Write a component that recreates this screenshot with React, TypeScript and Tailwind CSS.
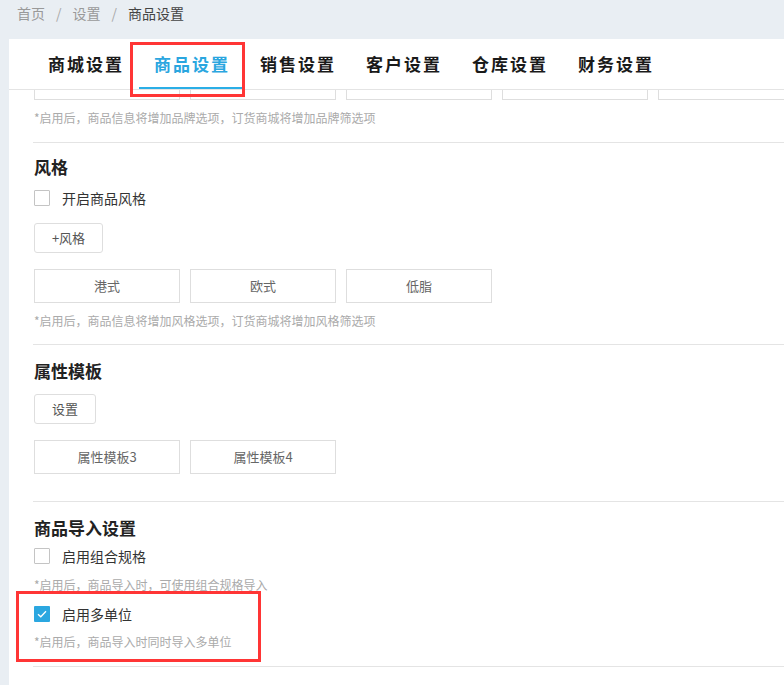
import React from 'react'

const font = { fontFamily: '"Noto Sans CJK SC", "Microsoft YaHei", sans-serif' }

const tabs = ['商城设置', '商品设置', '销售设置', '客户设置', '仓库设置', '财务设置']

function Box({ label }: { label?: string }) {
  return (
    <div className="flex h-[34px] w-[146px] shrink-0 items-center justify-center border border-[#dedede] text-[13px] text-[#666]">
      {label}
    </div>
  )
}

function Checkbox({ checked, label }: { checked?: boolean; label: string }) {
  return (
    <div className="flex h-[24px] items-center">
      {checked ? (
        <span className="flex h-[16px] w-[16px] items-center justify-center rounded-[1px] bg-[#2ba7e0]">
          <svg width="10" height="8" viewBox="0 0 10 8" fill="none">
            <path d="M1 4.2 3.8 6.8 9 1.2" stroke="white" strokeWidth="1.3" />
          </svg>
        </span>
      ) : (
        <span className="h-[16px] w-[16px] rounded-[1px] border border-[#c4c4c4] bg-white" />
      )}
      <span className="ml-[12px] text-[14px] text-[#333]">{label}</span>
    </div>
  )
}

function Helper({ children, className = '' }: { children: React.ReactNode; className?: string }) {
  return <div className={`text-[12px] leading-[20px] text-[#aaa] ${className}`}>{children}</div>
}

function Heading({ children, className = '' }: { children: React.ReactNode; className?: string }) {
  return <div className={`text-[17px] font-bold leading-[24px] text-[#222] ${className}`}>{children}</div>
}

function Divider({ className = '' }: { className?: string }) {
  return <div className={`ml-[-1px] h-px bg-[#e4e4e4] ${className}`} />
}

function Button({ children, width }: { children: React.ReactNode; width: string }) {
  return (
    <div className={`flex h-[30px] ${width} items-center justify-center rounded-[3px] border border-[#dedede] text-[13px] text-[#555]`}>
      {children}
    </div>
  )
}

export default function App() {
  return (
    <div className="h-[685px] w-full overflow-hidden bg-[#e9eef3]" style={font}>
      <div className="flex h-[39px] items-start pl-[17px] pt-[3px] text-[14px] leading-[20px]">
        <span className="text-[#999]">首页</span>
        <span className="mx-[11px] text-[#aaa]">/</span>
        <span className="text-[#999]">设置</span>
        <span className="mx-[11px] text-[#aaa]">/</span>
        <span className="text-[#444]">商品设置</span>
      </div>

      <div className="ml-[9px] h-[646px] overflow-hidden bg-white">
        <div className="relative z-10 flex h-[51px] border-b border-[#e4e4e4] bg-white pl-[23px]">
          {tabs.map((tab, i) => (
            <div
              key={tab}
              className={`relative flex h-full w-[106px] items-center justify-center pl-[2px] text-[17px] font-bold tracking-[2px] ${
                i === 1 ? 'text-[#2aa6df]' : 'text-[#1a1a1a]'
              }`}
            >
              {tab}
              {i === 1 && (
                <>
                  <span className="absolute bottom-0 left-[1px] right-[2px] h-[2px] bg-[#2aaee6]" />
                  <span className="pointer-events-none absolute left-[-8px] top-[3px] h-[55px] w-[115px] border-[3px] border-[#ff3535]" />
                </>
              )}
            </div>
          ))}
        </div>

        <div className="pl-[25px]">
          <div className="mt-[-24px] flex gap-[10px]">
            <Box />
            <Box />
            <Box />
            <Box />
            <Box />
          </div>
          <Helper className="mt-[8px]">*启用后，商品信息将增加品牌选项，订货商城将增加品牌筛选项</Helper>
          <Divider className="mt-[14px]" />

          <Heading className="pt-[12px]">风格</Heading>
          <div className="mt-[7px]">
            <Checkbox label="开启商品风格" />
          </div>
          <div className="mt-[13px]">
            <Button width="w-[69px]">+风格</Button>
          </div>
          <div className="mt-[16px] flex gap-[10px]">
            <Box label="港式" />
            <Box label="欧式" />
            <Box label="低脂" />
          </div>
          <Helper className="mt-[8px]">*启用后，商品信息将增加风格选项，订货商城将增加风格筛选项</Helper>
          <Divider className="mt-[13px]" />

          <Heading className="pt-[14px]">属性模板</Heading>
          <div className="mt-[11px]">
            <Button width="w-[62px]">设置</Button>
          </div>
          <div className="mt-[16px] flex gap-[10px]">
            <Box label="属性模板3" />
            <Box label="属性模板4" />
          </div>
          <Divider className="mt-[27px]" />

          <Heading className="pt-[14px]">商品导入设置</Heading>
          <div className="mt-[4px]">
            <Checkbox label="启用组合规格" />
          </div>
          <Helper className="mt-[7px]">*启用后，商品导入时，可使用组合规格导入</Helper>
          <div className="relative mt-[7px]">
            <Checkbox checked label="启用多单位" />
            <Helper className="mt-[6px]">*启用后，商品导入时同时导入多单位</Helper>
            <span className="pointer-events-none absolute left-[-18px] top-[-11px] h-[71px] w-[245px] border-[3px] border-[#ff3535]" />
          </div>
          <Divider className="mt-[14px]" />
        </div>
      </div>
    </div>
  )
}
